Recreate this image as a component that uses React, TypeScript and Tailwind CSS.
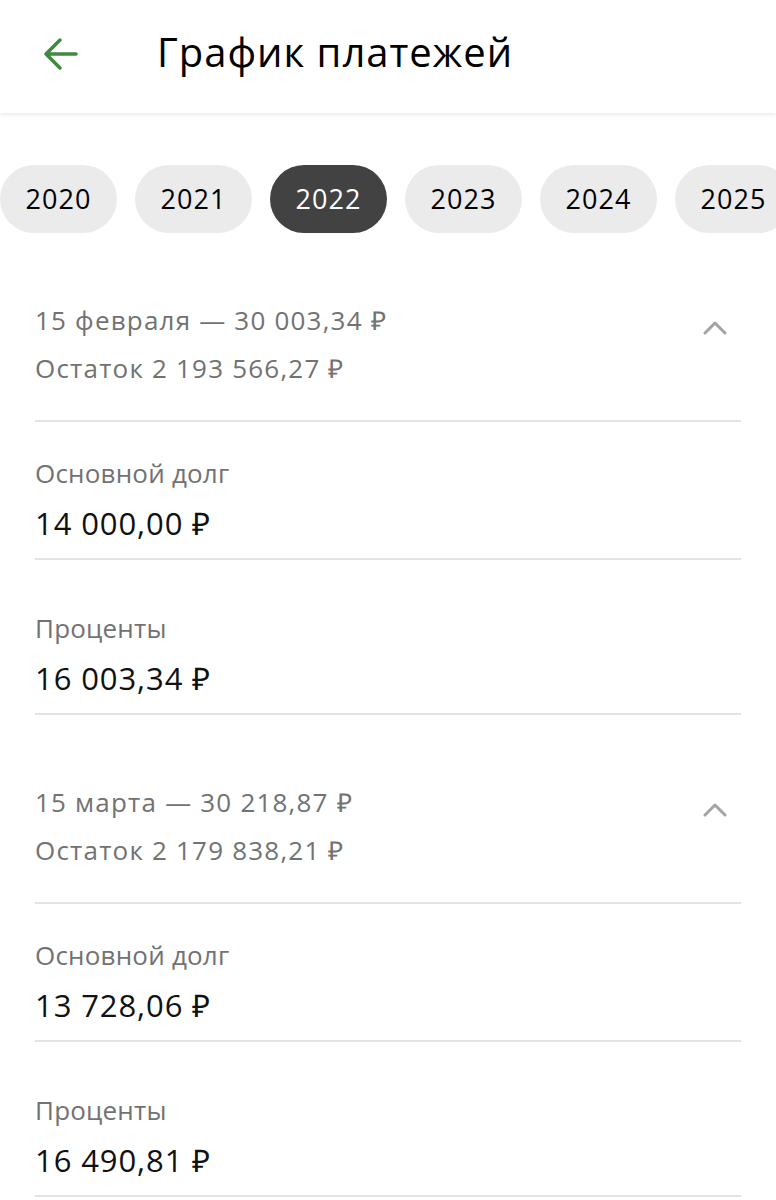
import React from "react";

const years = ["2020", "2021", "2022", "2023", "2024", "2025"];

const payments = [
  {
    title: "15 февраля — 30 003,34 ₽",
    rest: "Остаток 2 193 566,27 ₽",
    principal: "14 000,00 ₽",
    interest: "16 003,34 ₽",
  },
  {
    title: "15 марта — 30 218,87 ₽",
    rest: "Остаток 2 179 838,21 ₽",
    principal: "13 728,06 ₽",
    interest: "16 490,81 ₽",
  },
];

function Row({ label, value, first }: { label: string; value: string; first?: boolean }) {
  return (
    <div className={first ? "pt-[27px]" : "pt-[44px]"}>
      <div className="text-[26px] leading-[48px] tracking-[0.2px] text-[#727272]">{label}</div>
      <div className="pb-[9px] text-[31px] leading-[52px] tracking-[0.9px] text-[#111]">{value}</div>
      <div className="h-[2px] bg-[#e3e3e3]" />
    </div>
  );
}

export default function App() {
  return (
    <div className="min-h-[1200px] w-[776px] overflow-hidden bg-white font-['Open_Sans',sans-serif]">
      <header className="flex h-[113px] items-center bg-white shadow-[0_2px_4px_rgba(0,0,0,0.08)]">
        <svg className="mb-[6px] ml-[42px] h-[36px] w-[36px]" viewBox="0 0 36 36" fill="none">
          <path d="M34 18H4M18 4 4 18l14 14" stroke="#3f8a3f" strokeWidth="3.5" strokeLinecap="round" strokeLinejoin="round" />
        </svg>
        <h1 className="mb-[10px] ml-[79px] text-[40px] leading-none tracking-[1px] text-black">График платежей</h1>
      </header>

      <div className="mt-[52px] flex gap-[18px]">
        {years.map((y) => (
          <div
            key={y}
            className={
              "flex h-[68px] w-[117px] shrink-0 items-center justify-center rounded-full text-[27px] tracking-[1px] " +
              (y === "2022" ? "bg-[#424242] text-white" : "bg-[#ebebeb] text-black")
            }
          >
            {y}
          </div>
        ))}
      </div>

      <div className="px-[35px]">
        {payments.map((p) => (
          <section key={p.title} className="mt-[63px]">
            <div className="flex items-start justify-between">
              <div className="text-[26px] leading-[48px] tracking-[1.2px] text-[#727272]">
                <div>{p.title}</div>
                <div>{p.rest}</div>
              </div>
              <svg className="mr-[14px] mt-[24px] h-[16px] w-[24px]" viewBox="0 0 24 16" fill="none">
                <path d="M2 13 12 3l10 10" stroke="#a3a3a3" strokeWidth="3" strokeLinecap="round" strokeLinejoin="round" />
              </svg>
            </div>
            <div className="mt-[28px] h-[2px] bg-[#e3e3e3]" />
            <Row label="Основной долг" value={p.principal} first />
            <Row label="Проценты" value={p.interest} />
          </section>
        ))}
      </div>
    </div>
  );
}
